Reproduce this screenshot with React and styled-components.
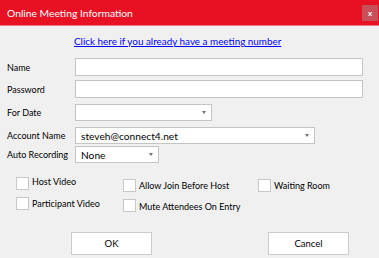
import React from 'react'
import styled, { createGlobalStyle } from 'styled-components'

const GlobalStyle = createGlobalStyle`
  html, body {
    margin: 0;
    padding: 0;
    background: #f0f0f0;
  }
  body {
    font-family: Lato, 'Open Sans', sans-serif;
    font-size: 9px;
    color: #000;
  }
`

const Window = styled.div`
  width: 379px;
  height: 258px;
  background: #f0f0f0;
  overflow: hidden;
`

const TitleBar = styled.div`
  height: 26px;
  background: #e81123;
  border-bottom: 1px solid #f07a85;
  box-sizing: border-box;
  display: flex;
  align-items: center;
  justify-content: space-between;
  padding-left: 7px;
  padding-right: 1px;
`

const Title = styled.span`
  color: #fff;
  font-size: 10.3px;
`

const CloseButton = styled.div`
  width: 16px;
  height: 16px;
  background: #c8505a;
  color: #fff;
  font-size: 8px;
  font-weight: bold;
  display: flex;
  align-items: center;
  justify-content: center;
  line-height: 1;
`

const Body = styled.div`
  padding: 7px 0 0 7px;
`

const LinkRow = styled.div`
  padding-left: 67px;
  height: 16px;
  display: flex;
  align-items: center;
`

const Link = styled.a`
  color: #0000ff;
  text-decoration: underline;
  font-size: 9.9px;
  cursor: pointer;
`

const FormRow = styled.div`
  display: grid;
  grid-template-columns: 68px auto;
  align-items: center;
  margin-top: ${(p) => p.$gap}px;
`

const Label = styled.label`
  font-size: 9px;
  white-space: nowrap;
`

const Field = styled.div`
  width: ${(p) => p.$width}px;
  height: ${(p) => p.$height || 18}px;
  box-sizing: border-box;
  background: #fff;
  border: 1px solid #c4c4c4;
  display: flex;
  align-items: center;
  justify-content: space-between;
  padding: 0 5px 0 5px;
  font-size: 10.2px;
`

const Arrow = styled.span`
  width: 0;
  height: 0;
  border-left: 2.5px solid transparent;
  border-right: 2.5px solid transparent;
  border-top: 3px solid #707070;
`

const Checks = styled.div`
  display: flex;
  padding-left: 9px;
  margin-top: 14px;
`

const CheckColumn = styled.div`
  display: flex;
  flex-direction: column;
  gap: 6px;
  width: ${(p) => p.$width}px;
  padding-top: ${(p) => p.$offset || 0}px;
`

const CheckItem = styled.div`
  display: flex;
  align-items: flex-start;
  gap: 3px;
  height: 14px;
`

const Box = styled.span`
  width: 13px;
  height: 13px;
  box-sizing: border-box;
  background: #fff;
  border: 1px solid #c8c8c8;
  flex: none;
`

const CheckLabel = styled.span`
  font-size: 9px;
  line-height: 11px;
  margin-top: ${(p) => p.$shift || 0}px;
`

const Buttons = styled.div`
  display: flex;
  padding-left: 64px;
  gap: 116px;
  margin-top: 19px;
`

const Button = styled.button`
  width: 81px;
  height: 23px;
  box-sizing: border-box;
  background: #fff;
  border: 1px solid #cccccc;
  font-family: inherit;
  font-size: 9.5px;
  color: #000;
  padding: 0;
`

const Check = ({ label, shift }) => (
  <CheckItem>
    <Box />
    <CheckLabel $shift={shift}>{label}</CheckLabel>
  </CheckItem>
)

export default function App() {
  return (
    <Window>
      <GlobalStyle />
      <TitleBar>
        <Title>Online Meeting Information</Title>
        <CloseButton>x</CloseButton>
      </TitleBar>
      <Body>
        <LinkRow>
          <Link>Click here if you already have a meeting number</Link>
        </LinkRow>
        <FormRow $gap={9}>
          <Label>Name</Label>
          <Field $width={288} />
        </FormRow>
        <FormRow $gap={4}>
          <Label>Password</Label>
          <Field $width={288} />
        </FormRow>
        <FormRow $gap={6}>
          <Label>For Date</Label>
          <Field $width={137} $height={17}>
            <span />
            <Arrow />
          </Field>
        </FormRow>
        <FormRow $gap={6}>
          <Label>Account Name</Label>
          <Field $width={240} $height={17}>
            <span>steveh@connect4.net</span>
            <Arrow />
          </Field>
        </FormRow>
        <FormRow $gap={2}>
          <Label>Auto Recording</Label>
          <Field $width={84} $height={17}>
            <span>None</span>
            <Arrow />
          </Field>
        </FormRow>
        <Checks>
          <CheckColumn $width={107}>
            <Check label="Host Video" shift={-1} />
            <Check label="Participant Video" shift={1} />
          </CheckColumn>
          <CheckColumn $width={135} $offset={2}>
            <Check label="Allow Join Before Host" shift={1} />
            <Check label="Mute Attendees On Entry" shift={2} />
          </CheckColumn>
          <CheckColumn $offset={2}>
            <Check label="Waiting Room" shift={1} />
          </CheckColumn>
        </Checks>
        <Buttons>
          <Button>OK</Button>
          <Button>Cancel</Button>
        </Buttons>
      </Body>
    </Window>
  )
}
